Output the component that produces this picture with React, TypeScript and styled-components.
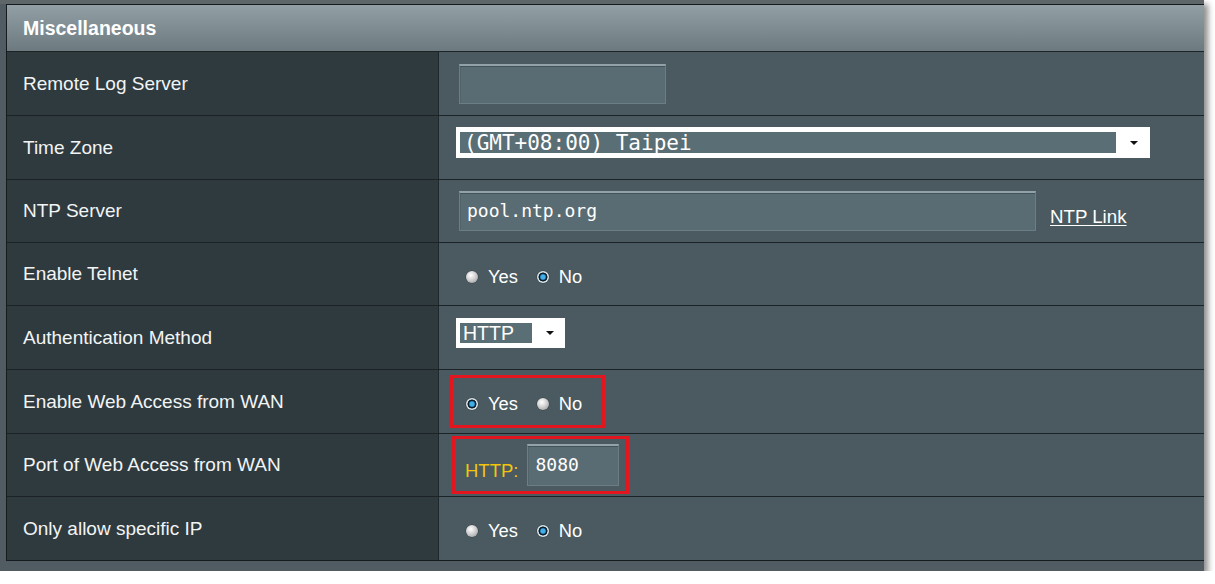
import React from "react";
import styled, { createGlobalStyle } from "styled-components";

const GlobalStyle = createGlobalStyle`
  html, body { margin: 0; padding: 0; background: #ffffff; }
  body { font-family: "Liberation Sans", Arial, sans-serif; }
`;

const Frame = styled.div`
  width: 1204px;
  box-sizing: border-box;
  background: #515c62;
  border-top: 4px solid #5f6669;
  padding: 0 0 10px 6px;
  box-shadow: 4px 4px 6px rgba(0, 0, 0, 0.45);
`;

const Table = styled.div`
  border: 1px solid #151b1e;
  border-right: none;
  display: flex;
  flex-direction: column;
`;

const Header = styled.div`
  height: 46px;
  display: flex;
  align-items: center;
  padding-left: 16px;
  background: linear-gradient(#929fa5, #6c7a80);
  color: #ffffff;
  font-weight: bold;
  font-size: 19.5px;
`;

const Row = styled.div<{ $h: number }>`
  display: grid;
  grid-template-columns: 432px 1fr;
  height: ${(p) => p.$h}px;
  box-sizing: border-box;
  border-top: 1px solid #1b2327;
`;

const LabelCell = styled.div`
  background: #2f3a3f;
  border-right: 1px solid #1e272b;
  color: #f2f4f5;
  font-size: 19px;
  display: flex;
  align-items: center;
  padding-left: 16px;
`;

const ValueCell = styled.div<{ $pad: number }>`
  background: #4a5a60;
  display: flex;
  align-items: center;
  padding-left: ${(p) => p.$pad}px;
`;

const TextInput = styled.div<{ $w: number; $h?: number }>`
  width: ${(p) => p.$w}px;
  height: ${(p) => p.$h ?? 40}px;
  box-sizing: border-box;
  background: #5a6c73;
  border: 1px solid #6c7d83;
  border-top: 2px solid #93a2a8;
  box-shadow: inset 0 1px 0 #43535a, inset 1px 0 0 #52636a;
  color: #ffffff;
  font-family: "DejaVu Sans Mono", "Liberation Mono", monospace;
  font-size: 18px;
  display: flex;
  align-items: center;
  padding: 0 0 2px 7px;
`;

const SelectBox = styled.div<{ $w: number; $h: number; $lift: number }>`
  width: ${(p) => p.$w}px;
  height: ${(p) => p.$h}px;
  box-sizing: border-box;
  background: #ffffff;
  padding: 5px 4px 5px 4px;
  margin-bottom: ${(p) => p.$lift}px;
  display: flex;
  align-items: center;
`;

const SelectValue = styled.div<{ $w: number; $mono?: boolean }>`
  width: ${(p) => p.$w}px;
  height: 100%;
  background: #5a6e75;
  color: #ffffff;
  display: flex;
  align-items: center;
  padding-left: ${(p) => (p.$mono ? 4 : 3)}px;
  box-sizing: border-box;
  font-family: ${(p) =>
    p.$mono ? `"DejaVu Sans Mono", "Liberation Mono", monospace` : `"Liberation Sans", Arial, sans-serif`};
  font-size: ${(p) => (p.$mono ? 21 : 19.5)}px;
  white-space: pre;
`;

const Caret = styled.div`
  flex: 1;
  display: flex;
  justify-content: center;
  &::after {
    content: "";
    width: 0;
    height: 0;
    border-left: 4px solid transparent;
    border-right: 4px solid transparent;
    border-top: 4px solid #111111;
    margin-left: 6px;
  }
`;

const LinkText = styled.a`
  color: #ffffff;
  text-decoration: underline;
  text-underline-offset: 2px;
  font-size: 18.7px;
  margin-left: 14px;
  margin-top: 12px;
  cursor: pointer;
`;

const RadioGroup = styled.div`
  display: flex;
  align-items: center;
  padding-top: 5px;
`;

const RadioOption = styled.label`
  display: flex;
  align-items: center;
  gap: 10px;
  color: #ffffff;
  font-size: 18.3px;
  margin-right: 19px;
`;

const RadioDot = styled.span<{ $on?: boolean }>`
  width: 12px;
  height: 12px;
  border-radius: 50%;
  display: inline-block;
  box-sizing: border-box;
  background: ${(p) =>
    p.$on
      ? "radial-gradient(circle, #44aee6 0 2px, #1c6e9e 2.8px, #0c1f2c 3.4px 4.2px, #d9e1e5 4.8px)"
      : "radial-gradient(circle at 40% 35%, #ffffff 0, #dcdcdc 35%, #a9a9a9 80%, #8a8a8a 100%)"};
  box-shadow: 0 0 0 0.5px rgba(40, 50, 55, 0.6);
`;

const Highlight = styled.div<{ $w: number; $h: number; $pl: number }>`
  width: ${(p) => p.$w}px;
  height: ${(p) => p.$h}px;
  box-sizing: border-box;
  border: 3px solid #e3161f;
  display: flex;
  align-items: center;
  padding-left: ${(p) => p.$pl}px;
`;

const PortLabel = styled.span`
  color: #f2c40c;
  font-size: 18.5px;
  margin-top: 11px;
  margin-right: 9px;
`;

const Radios = ({ yes }: { yes: boolean }) => (
  <RadioGroup>
    <RadioOption>
      <RadioDot $on={yes} />
      Yes
    </RadioOption>
    <RadioOption>
      <RadioDot $on={!yes} />
      No
    </RadioOption>
  </RadioGroup>
);

export default function App() {
  return (
    <>
      <GlobalStyle />
      <Frame>
        <Table>
          <Header>Miscellaneous</Header>
          <Row $h={64}>
            <LabelCell>Remote Log Server</LabelCell>
            <ValueCell $pad={20}>
              <TextInput $w={207} />
            </ValueCell>
          </Row>
          <Row $h={64}>
            <LabelCell>Time Zone</LabelCell>
            <ValueCell $pad={17}>
              <SelectBox $w={694} $h={31} $lift={10}>
                <SelectValue $w={656} $mono>
                  (GMT+08:00) Taipei
                </SelectValue>
                <Caret />
              </SelectBox>
            </ValueCell>
          </Row>
          <Row $h={63}>
            <LabelCell>NTP Server</LabelCell>
            <ValueCell $pad={20}>
              <TextInput $w={577}>pool.ntp.org</TextInput>
              <LinkText>NTP Link</LinkText>
            </ValueCell>
          </Row>
          <Row $h={63}>
            <LabelCell>Enable Telnet</LabelCell>
            <ValueCell $pad={27}>
              <Radios yes={false} />
            </ValueCell>
          </Row>
          <Row $h={64}>
            <LabelCell>Authentication Method</LabelCell>
            <ValueCell $pad={17}>
              <SelectBox $w={109} $h={30} $lift={9}>
                <SelectValue $w={72}>HTTP</SelectValue>
                <Caret />
              </SelectBox>
            </ValueCell>
          </Row>
          <Row $h={64}>
            <LabelCell>Enable Web Access from WAN</LabelCell>
            <ValueCell $pad={11}>
              <Highlight $w={155} $h={53} $pl={13}>
                <Radios yes={true} />
              </Highlight>
            </ValueCell>
          </Row>
          <Row $h={63}>
            <LabelCell>Port of Web Access from WAN</LabelCell>
            <ValueCell $pad={13}>
              <Highlight $w={177} $h={58} $pl={10}>
                <PortLabel>HTTP:</PortLabel>
                <TextInput $w={92} $h={42}>
                  8080
                </TextInput>
              </Highlight>
            </ValueCell>
          </Row>
          <Row $h={64}>
            <LabelCell>Only allow specific IP</LabelCell>
            <ValueCell $pad={27}>
              <Radios yes={false} />
            </ValueCell>
          </Row>
        </Table>
      </Frame>
    </>
  );
}
